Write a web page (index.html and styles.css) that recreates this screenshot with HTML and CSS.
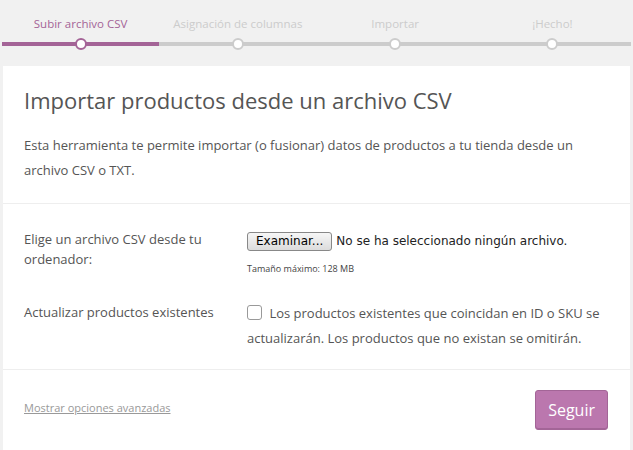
FILE: index.html
```html
<!DOCTYPE html>
<html>
<head>
  <meta charset="utf-8">
  <title>Importar productos</title>
  <link rel="stylesheet" href="styles.css">
</head>
<body>

<ol class="steps">
  <li class="active">Subir archivo CSV</li>
  <li>Asignación de columnas</li>
  <li>Importar</li>
  <li>¡Hecho!</li>
</ol>

<div class="card">
  <header class="card-head">
    <h2>Importar productos desde un archivo CSV</h2>
    <p>Esta herramienta te permite importar (o fusionar) datos de productos a tu tienda desde un archivo CSV o TXT.</p>
  </header>

  <section class="card-body">
    <div class="row">
      <label class="row-label" for="upload">Elige un archivo CSV desde tu ordenador:</label>
      <div class="row-field">
        <div class="file">
          <span class="file-btn">Examinar...</span>
          <span class="file-name">No se ha seleccionado ningún archivo.</span>
        </div>
        <small class="hint">Tamaño máximo: 128 MB</small>
      </div>
    </div>
    <div class="row">
      <label class="row-label" for="update">Actualizar productos existentes</label>
      <div class="row-field">
        <span class="check"></span> Los productos existentes que coincidan en ID o SKU se actualizarán. Los productos que no existan se omitirán.
      </div>
    </div>
  </section>

  <footer class="card-foot">
    <a href="#" class="advanced">Mostrar opciones avanzadas</a>
    <button class="button">Seguir</button>
  </footer>
</div>

</body>
</html>
```

FILE: styles.css
```css
body {
  margin: 0;
  background: #f1f1f1;
  font-family: "Open Sans", sans-serif;
  color: #555;
  height: 450px;
  overflow: hidden;
}
.steps {
  display: flex;
  list-style: none;
  margin: 0;
  padding: 16px 2px 0 2px;
}
.steps li {
  flex: 1;
  text-align: center;
  font-size: 11.5px;
  line-height: 16px;
  color: #ccc;
  padding-bottom: 10px;
  border-bottom: 4px solid #ccc;
  position: relative;
}
.steps li::before {
  content: "";
  position: absolute;
  left: 50%;
  bottom: -8px;
  margin-left: -6px;
  width: 8px;
  height: 8px;
  border-radius: 50%;
  border: 2px solid #ccc;
  background: #fff;
}
.steps li.active {
  color: #a46497;
  border-color: #a46497;
}
.steps li.active::before {
  border-color: #a46497;
}
.card {
  margin: 20px 3px 0 3px;
  background: #fff;
}
.card-head {
  padding: 19px 21px 20px 21px;
  border-bottom: 1px solid #eee;
}
.card-head h2 {
  margin: 0 0 18px;
  font-size: 22px;
  line-height: 30px;
  font-weight: normal;
  color: #555;
}
.card-head p {
  margin: 0;
  font-size: 13px;
  line-height: 25px;
}
.card-body {
  padding: 25px 21px 18px;
  border-bottom: 1px solid #eee;
  font-size: 13px;
  line-height: 25px;
}
.row {
  display: flex;
  margin-bottom: 22px;
}
.row:last-child {
  margin-bottom: 0;
}
.row-label {
  width: 223px;
  flex: none;
  line-height: 20px;
}
.row:last-child .row-label {
  padding-top: 1px;
}
.row-field {
  flex: 1;
}
.file {
  display: flex;
  align-items: center;
  gap: 4px;
}
.file-btn {
  font-family: "DejaVu Sans", sans-serif;
  font-size: 12px;
  color: #000;
  line-height: 17px;
  padding: 0 8px;
  border: 1px solid #888;
  border-radius: 3px;
  background: linear-gradient(#f6f6f6, #dcdcdc);
}
.file-name {
  font-family: "DejaVu Sans", sans-serif;
  font-size: 12px;
  color: #222;
}
.hint {
  display: block;
  margin-top: 5px;
  font-size: 9px;
  line-height: 20px;
  color: #444;
}
.check {
  display: inline-block;
  width: 13px;
  height: 13px;
  border: 1px solid #999;
  border-radius: 3px;
  vertical-align: -2px;
  margin-right: 4px;
}
.card-foot {
  display: flex;
  justify-content: space-between;
  align-items: center;
  padding: 20px 22px 21px 21px;
}
.advanced {
  font-size: 11px;
  color: #999;
  margin-bottom: 6px;
}
.button {
  font-family: "Open Sans", sans-serif;
  font-size: 16px;
  color: #fff;
  background: #bb77ae;
  border: 1px solid #a36597;
  border-radius: 3px;
  padding: 0 12px;
  height: 40px;
  box-shadow: inset 0 -1px 0 #a36597;
}
```
